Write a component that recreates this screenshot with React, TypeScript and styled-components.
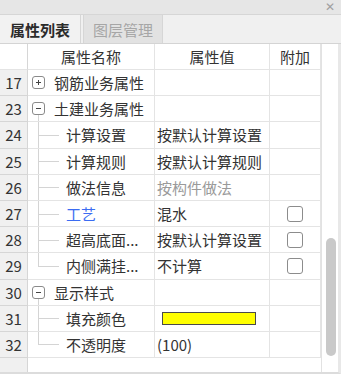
import React from "react";
import styled, { createGlobalStyle } from "styled-components";

const Global = createGlobalStyle`
  html, body { margin: 0; padding: 0; background: #ffffff; }
  body { font-family: "Noto Sans CJK SC", "Noto Sans", sans-serif; }
`;

const Panel = styled.div`
  width: 341px;
  height: 374px;
  box-sizing: border-box;
  display: flex;
  flex-direction: column;
  background: #f0f0f0;
  overflow: hidden;
`;

const TitleBar = styled.div`
  height: 14px;
  background: #e6e6e6;
  border-bottom: 1px solid #d6d6d6;
  display: flex;
  justify-content: flex-end;
  align-items: center;
  padding-right: 6px;
`;

const Close = styled.span`
  font-family: "DejaVu Sans", sans-serif;
  font-size: 12px;
  line-height: 12px;
  color: #a0a0a0;
`;

const TabBar = styled.div`
  height: 28px;
  display: flex;
  align-items: stretch;
  gap: 2px;
  background: #f0f0f0;
  border-bottom: 1px solid #d4d4d4;
  padding-left: 0;
`;

const Tab = styled.div<{ $active?: boolean }>`
  width: ${(p) => (p.$active ? "81px" : "80px")};
  box-sizing: border-box;
  display: flex;
  align-items: center;
  justify-content: center;
  font-size: 15px;
  font-weight: ${(p) => (p.$active ? 700 : 400)};
  color: ${(p) => (p.$active ? "#2b2b2b" : "#a6a6a6")};
  background: ${(p) => (p.$active ? "#f2f2f2" : "#e2e2e2")};
  border-right: 1px solid #d6d6d6;
  border-left: ${(p) => (p.$active ? "none" : "1px solid #d6d6d6")};
`;

const Body = styled.div`
  flex: 1;
  display: flex;
  min-height: 0;
  border-right: 3px solid #e8e8e8;
  border-bottom: 2px solid #dcdcdc;
  background: #ffffff;
`;

const Grid = styled.div`
  width: 322px;
  display: flex;
  flex-direction: column;
  background: linear-gradient(to right, #f0f0f0 28px, #ffffff 28px);
  border-right: 1px solid #e2e2e2;
  box-sizing: border-box;
`;

const Row = styled.div<{ $h?: number }>`
  display: grid;
  grid-template-columns: 28px 127px 115px 51px;
  height: ${(p) => p.$h ?? 26.2}px;
  box-sizing: border-box;
`;

const NumCell = styled.div<{ $header?: boolean }>`
  background: ${(p) => (p.$header ? "#ffffff" : "#f0f0f0")};
  border-right: 1px solid #d6d6d6;
  border-bottom: 1px solid ${(p) => (p.$header ? "#e4e4e4" : "#d6d6d6")};
  display: flex;
  align-items: center;
  justify-content: center;
  font-size: 15px;
  color: #333;
  box-sizing: border-box;
`;

const Cell = styled.div<{ $align?: string; $color?: string }>`
  border-right: 1px solid #e4e4e4;
  border-bottom: 1px solid #e4e4e4;
  display: flex;
  align-items: center;
  justify-content: ${(p) => p.$align ?? "flex-start"};
  font-size: 15px;
  color: ${(p) => p.$color ?? "#333"};
  white-space: nowrap;
  overflow: hidden;
  box-sizing: border-box;
  position: relative;
`;

const ValueCell = styled(Cell)`
  padding-left: 2px;
`;

const Toggle = styled.span<{ $open?: boolean }>`
  width: 13px;
  height: 13px;
  box-sizing: border-box;
  border: 1px solid #8a8a8a;
  border-radius: 3px;
  margin-left: 4px;
  margin-right: 9px;
  position: relative;
  flex: none;
  background: #fff;
  &::before {
    content: "";
    position: absolute;
    left: 3px;
    top: 5px;
    width: 5px;
    height: 1px;
    background: #444;
  }
  &::after {
    content: "";
    display: ${(p) => (p.$open ? "none" : "block")};
    position: absolute;
    left: 5px;
    top: 3px;
    width: 1px;
    height: 5px;
    background: #444;
  }
`;

const OpenLine = styled.span`
  position: absolute;
  left: 10px;
  top: 19px;
  bottom: -1px;
  width: 1px;
  background: #d4d4d4;
`;

const Gutter = styled.span<{ $last?: boolean }>`
  width: 38px;
  align-self: stretch;
  position: relative;
  flex: none;
  &::before {
    content: "";
    position: absolute;
    left: 10px;
    top: -1px;
    width: 1px;
    height: ${(p) => (p.$last ? "calc(50% + 1px)" : "calc(100% + 1px)")};
    background: #d4d4d4;
  }
  &::after {
    content: "";
    position: absolute;
    left: 10px;
    top: 50%;
    width: 21px;
    height: 1px;
    background: #d4d4d4;
  }
`;

const Check = styled.span`
  width: 16px;
  height: 16px;
  box-sizing: border-box;
  border: 1.5px solid #8c8c8c;
  border-radius: 3px;
  background: #fff;
`;

const Swatch = styled.span<{ $color: string }>`
  width: 94px;
  height: 13px;
  margin-left: 5px;
  box-sizing: border-box;
  background: ${(p) => p.$color};
  border: 1px solid #4a4a4a;
`;

const Filler = styled.div`
  flex: 1;
  display: grid;
  grid-template-columns: 28px 1fr;
`;

const FillerNum = styled.div`
  background: #f0f0f0;
  border-right: 1px solid #d6d6d6;
`;

const ScrollArea = styled.div`
  flex: 1;
  display: flex;
  flex-direction: column;
  justify-content: flex-end;
  align-items: center;
  padding-bottom: 16px;
  background: #ffffff;
`;

const Thumb = styled.div`
  width: 10px;
  height: 118px;
  border-radius: 5px;
  background: #c9c9c9;
  margin-left: 1px;
`;

type RowData = {
  n: number;
  name: string;
  kind: "group" | "child";
  open?: boolean;
  last?: boolean;
  nameColor?: string;
  value?: string;
  valueColor?: string;
  swatch?: string;
  check?: boolean;
};

const rows: RowData[] = [
  { n: 17, name: "钢筋业务属性", kind: "group", open: false },
  { n: 23, name: "土建业务属性", kind: "group", open: true },
  { n: 24, name: "计算设置", kind: "child", value: "按默认计算设置" },
  { n: 25, name: "计算规则", kind: "child", value: "按默认计算规则" },
  { n: 26, name: "做法信息", kind: "child", value: "按构件做法", valueColor: "#9a9a9a" },
  { n: 27, name: "工艺", kind: "child", nameColor: "#3b6cf2", value: "混水", check: true },
  { n: 28, name: "超高底面...", kind: "child", value: "按默认计算设置", check: true },
  { n: 29, name: "内侧满挂...", kind: "child", last: true, value: "不计算", check: true },
  { n: 30, name: "显示样式", kind: "group", open: true },
  { n: 31, name: "填充颜色", kind: "child", swatch: "#ffff00" },
  { n: 32, name: "不透明度", kind: "child", last: true, value: "(100)" },
];

export default function App() {
  return (
    <>
      <Global />
      <Panel>
        <TitleBar>
          <Close>✕</Close>
        </TitleBar>
        <TabBar>
          <Tab $active>属性列表</Tab>
          <Tab>图层管理</Tab>
        </TabBar>
        <Body>
          <Grid>
            <Row $h={26}>
              <NumCell $header />
              <Cell $align="center">属性名称</Cell>
              <Cell $align="center">属性值</Cell>
              <Cell $align="center">附加</Cell>
            </Row>
            {rows.map((r) => (
              <Row key={r.n}>
                <NumCell>{r.n}</NumCell>
                <Cell $color={r.nameColor}>
                  {r.kind === "group" ? (
                    <>
                      <Toggle $open={r.open} />
                      {r.open && <OpenLine />}
                    </>
                  ) : (
                    <Gutter $last={r.last} />
                  )}
                  {r.name}
                </Cell>
                <ValueCell $color={r.valueColor}>
                  {r.swatch ? <Swatch $color={r.swatch} /> : r.value}
                </ValueCell>
                <Cell $align="center">{r.check && <Check />}</Cell>
              </Row>
            ))}
            <Filler>
              <FillerNum />
              <div />
            </Filler>
          </Grid>
          <ScrollArea>
            <Thumb />
          </ScrollArea>
        </Body>
      </Panel>
    </>
  );
}
